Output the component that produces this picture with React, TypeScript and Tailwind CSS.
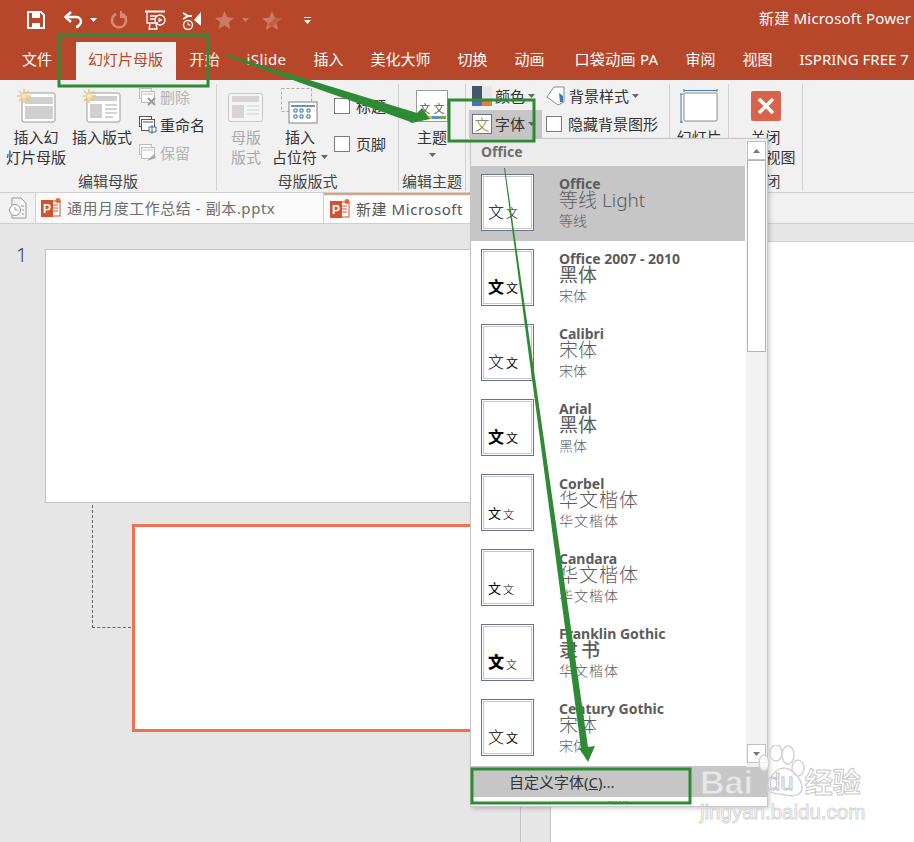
import type { ReactNode } from "react";

const tabs = ["文件", "幻灯片母版", "开始", "iSlide", "插入", "美化大师", "切换", "动画", "口袋动画 PA", "审阅", "视图", "ISPRING FREE 7"];

const fontSets = [
  { name: "Office", major: "等线 Light", minor: "等线", big: "font-light", a: "font-light", b: "font-light" },
  { name: "Office 2007 - 2010", major: "黑体", minor: "宋体", big: "font-normal", a: "font-bold", b: "font-normal" },
  { name: "Calibri", major: "宋体", minor: "宋体", big: "font-light", a: "font-light", b: "font-normal" },
  { name: "Arial", major: "黑体", minor: "黑体", big: "font-normal", a: "font-bold", b: "font-normal" },
  { name: "Corbel", major: "华文楷体", minor: "华文楷体", big: "font-light tracking-[1px]", a: "font-normal text-[13px]", b: "font-light text-[11px]" },
  { name: "Candara", major: "华文楷体", minor: "华文楷体", big: "font-light tracking-[1px]", a: "font-normal text-[13px]", b: "font-light text-[11px]" },
  { name: "Franklin Gothic", major: "隶书", minor: "华文楷体", big: "font-medium text-[16px] tracking-[3px]", a: "font-black", b: "font-light text-[11px]" },
  { name: "Century Gothic", major: "宋体", minor: "宋体", big: "font-light", a: "font-light", b: "font-normal" },
];

function Caret({ className = "text-[#666]" }: { className?: string }) {
  return (
    <svg width="7" height="4" viewBox="0 0 7 4" className={className}>
      <path d="M0 0h7L3.500 4z" fill="currentColor" />
    </svg>
  );
}

function Sun({ x, y }: { x: number; y: number }) {
  return (
    <g stroke="#f0c778" strokeWidth="1.5" transform={`translate(${x} ${y})`}>
      <path d="M0-7V7M-7 0H7M-5-5 5 5M-5 5 5-5" />
      <circle r="2.500" fill="#fbe6b8" stroke="none" />
    </g>
  );
}

function PptIcon() {
  return (
    <svg width="20" height="20" viewBox="0 0 20 20" className="shrink-0">
      <rect x="9" y="3" width="10" height="15" fill="#fff" stroke="#d2512e" />
      <path d="M12 7h5M12 10h5M12 13h5" stroke="#d2512e" />
      <rect x="0" y="2" width="12" height="17" fill="#d2512e" />
      <text x="6" y="15" fontSize="12" fontWeight="700" textAnchor="middle" fill="#fff" fontFamily="Liberation Sans">P</text>
      <circle cx="17" cy="2.500" r="2.500" fill="#f0642f" />
    </svg>
  );
}

function SmallGlyph({ muted = false, badge }: { muted?: boolean; badge: ReactNode }) {
  const c = muted ? "#bdbdbd" : "#555";
  return (
    <svg width="18" height="18" viewBox="0 0 18 18" className="shrink-0">
      <rect x=".5" y=".5" width="12" height="10" fill="#fff" stroke={c} />
      <rect x="2.500" y="3.500" width="13" height="11" fill="#fff" stroke={c} />
      <path d="M4 6h10" stroke={c} />
      {badge}
    </svg>
  );
}

function Large({ w, icon, lines, muted, caret }: { w: string; icon: ReactNode; lines: string[]; muted?: boolean; caret?: boolean }) {
  return (
    <div className={`${w} flex h-[87px] flex-col items-center ${muted ? "text-[#a9a9a9]" : "text-[#333]"}`}>
      <div className="flex h-[43px] items-center justify-center">{icon}</div>
      {lines.map((l, i) => (
        <div key={l} className="flex items-center gap-1 whitespace-nowrap leading-5">
          {l}
          {caret && i === lines.length - 1 && <Caret />}
        </div>
      ))}
    </div>
  );
}

function Group({ w, label, children }: { w: string; label: string; children: ReactNode }) {
  return (
    <div className={`${w} flex h-[107px] flex-col border-r border-[#d2d2d2]`}>
      <div className="flex h-[87px]">{children}</div>
      <div className="text-center leading-5 whitespace-nowrap text-[#444]">{label}</div>
    </div>
  );
}

function Small({ icon, label, muted }: { icon: ReactNode; label: string; muted?: boolean }) {
  return (
    <div className={`flex h-7 items-center gap-[3px] whitespace-nowrap ${muted ? "text-[#b4b4b4]" : "text-[#333]"}`}>
      {icon}
      {label}
    </div>
  );
}

function CheckRow({ label }: { label: string }) {
  return (
    <div className="flex h-[22px] items-center gap-[6px] whitespace-nowrap text-[#333]">
      <span className="h-4 w-4 border border-[#7d7d7d] bg-white" />
      {label}
    </div>
  );
}

function FontRow({ item, active }: { item: (typeof fontSets)[number]; active: boolean }) {
  return (
    <div className={`flex h-[75px] w-[274px] ${active ? "bg-[#c6c6c6]" : ""}`}>
      <div className="mt-2 ml-[10px] flex h-[57px] w-[53px] items-end justify-start gap-[2px] border border-[#6a7283] bg-white pb-[10px] pl-[6px] text-black shadow-[inset_0_0_0_1px_#fff,inset_0_0_0_2px_#c3c8d0]">
        <span className={`leading-none ${item.a.includes("text-[") ? "" : "text-[16px]"} ${item.a}`}>文</span>
        <span className={`leading-none ${item.b.includes("text-[") ? "" : "text-[12px]"} ${item.b}`}>文</span>
      </div>
      <div className="ml-[25px] flex flex-col pt-[10px] text-[#5c5c5c]">
        <div className="h-[14px] text-[14px] leading-[15px] font-bold whitespace-nowrap">{item.name}</div>
        <div className={`-mt-px h-[22px] text-[19px] leading-[22px] whitespace-nowrap ${item.big}`}>{item.major}</div>
        <div className={`text-[14px] leading-[20px] font-light whitespace-nowrap ${item.minor === "华文楷体" ? "tracking-[1px]" : ""}`}>{item.minor}</div>
      </div>
    </div>
  );
}

function FontMenu() {
  return (
    <div className="absolute top-[138px] left-[470px] flex h-[669px] w-[298px] flex-col border border-[#c6c6c6] bg-white shadow-[2px_2px_4px_rgba(0,0,0,0.18)]">
      <div className="flex min-h-0 flex-1">
        <div className="w-[275px] border-b border-[#c6c6c6]">
          <div className="h-[27px] bg-[#ececec] pl-[10px] text-[14px] leading-[25px] font-bold text-[#6e6e6e]">Office</div>
          {fontSets.map((f, i) => (
            <FontRow key={f.name} item={f} active={i === 0} />
          ))}
        </div>
        <div className="flex w-[21px] flex-col bg-[#f1f1f1] pt-[2px] pl-[1px]">
          <div className="flex h-[19px] w-[19px] items-center justify-center border border-[#c0c0c0] bg-white">
            <Caret className="rotate-180 text-[#777]" />
          </div>
          <div className="h-[192px] w-[19px] border border-[#b4b4b4] bg-white" />
          <div className="flex-1" />
          <div className="mb-[4px] flex h-[19px] w-[19px] items-center justify-center border border-[#c0c0c0] bg-white">
            <Caret className="text-[#777]" />
          </div>
        </div>
      </div>
      <div className="flex h-[30px] items-center bg-[#c6c6c6] pl-[38px] text-[#333]">
        自定义字体(<span className="underline">C</span>)...
      </div>
      <div className="flex h-[9px] items-center justify-center pr-[2px] text-[#b0b0b0]">
        <span className="h-[2px] w-[20px] border-t-2 border-dotted border-[#b5b5b5]" />
      </div>
    </div>
  );
}

function Marks() {
  return (
    <svg className="pointer-events-none absolute inset-0" width="914" height="842" viewBox="0 0 914 842">
      <g fill="none" stroke="#2f8a36" strokeWidth="3">
        <rect x="59" y="35" width="149" height="51" />
        <rect x="449" y="100" width="85" height="41" />
        <rect x="472" y="769" width="218" height="34" />
      </g>
      <path d="M225 54 225 56 408 121 412 123 430 119 422 108 417 113z" fill="#2f8a36" />
      <path d="M504 168 505 168 588 747 595 746 588 762 579 748 581 748z" fill="#2f8a36" />
    </svg>
  );
}

function Watermark() {
  return (
    <div className="pointer-events-none absolute top-[745px] left-[700px] flex w-[170px] flex-col">
      <svg width="60" height="56" viewBox="0 0 60 56" className="absolute top-0 left-[58px]" fill="none" stroke="#d2d2d2" strokeWidth="1.500">
        <ellipse cx="6" cy="18" rx="5" ry="8" fill="#ffffff" fillOpacity=".8" />
        <ellipse cx="18" cy="8" rx="6" ry="8" fill="#ffffff" fillOpacity=".8" />
        <ellipse cx="30" cy="10" rx="6" ry="9" fill="#ffffff" fillOpacity=".8" />
        <ellipse cx="40" cy="23" rx="6" ry="8" fill="#ffffff" fillOpacity=".8" />
        <path d="M10 42c0-10 9-19 16-19s18 10 18 20c0 7-8 9-16 7s-18 0-18-8z" fill="#ffffff" fillOpacity=".6" />
      </svg>
      <div className="relative mt-[17px] flex items-center">
        <span className="text-[34px] leading-[40px] font-black text-[#e8e8e8] [-webkit-text-stroke:1px_#c9c9c9]" style={{ fontFamily: "Liberation Sans" }}>Bai</span>
        <span className="ml-[14px] text-[24px] leading-[40px] text-white [-webkit-text-stroke:1px_#c4c4c4]" style={{ fontFamily: "Liberation Sans" }}>du</span>
        <span className="ml-[11px] text-[28px] leading-[40px] font-bold text-white [-webkit-text-stroke:1px_#c9c9c9]">经验</span>
      </div>
      <div className="relative text-[20.500px] leading-[20px] text-white [-webkit-text-stroke:1px_#d6d6d6]" style={{ fontFamily: "Liberation Sans" }}>jingyan.baidu.com</div>
    </div>
  );
}

export default function App() {
  return (
    <div
      className="relative flex h-[842px] w-[914px] flex-col overflow-hidden bg-white text-[15px]"
      style={{ fontFamily: '"Noto Sans","Noto Sans CJK SC",sans-serif' }}
    >
      {/* title bar */}
      <div className="flex h-[40px] items-center bg-[#b7472a] pl-[27px] text-white">
        <svg width="18" height="18" viewBox="0 0 18 18">
          <path d="M1 1h13l3 3v13H1z" fill="none" stroke="#fff" strokeWidth="2" />
          <path d="M5 2h8v5H5zM5 12h8v4H5z" fill="#fff" />
        </svg>
        <svg width="20" height="18" viewBox="0 0 20 18" className="ml-[19px]">
          <path d="M2 6h10c4 0 5 3 5 4.500S15 16 12 16" fill="none" stroke="#fff" strokeWidth="2.500" />
          <path d="M7 1 1.500 6 7 11" fill="none" stroke="#fff" strokeWidth="2.500" />
        </svg>
        <Caret className="ml-[6px] text-white" />
        <svg width="18" height="18" viewBox="0 0 18 18" className="ml-[13px]">
          <path d="M6 3a7 7 0 1 0 6 0" fill="none" stroke="#d58a75" strokeWidth="2.500" />
          <path d="M11 0v6h6" fill="none" stroke="#d58a75" strokeWidth="2" />
        </svg>
        <svg width="21" height="20" viewBox="0 0 21 20" className="ml-[17px]">
          <path d="M0 1.500h20" stroke="#fff" strokeWidth="2" />
          <path d="M2 2v11h11M5 6h7M5 9h5M5 14 4 19h8l-1-5" fill="none" stroke="#fff" strokeWidth="1.300" />
          <circle cx="15" cy="10" r="5" fill="none" stroke="#fff" strokeWidth="1.300" />
          <path d="M13.500 7.500v5l4-2.500z" fill="#fff" />
        </svg>
        <svg width="20" height="20" viewBox="0 0 20 20" className="ml-[16px]">
          <path d="M19 2v14l-7-6z" fill="#fff" />
          <path d="M1 3l5 3-5 3M4 6h6" fill="none" stroke="#fff" strokeWidth="1.800" />
          <circle cx="6" cy="15" r="4.500" fill="none" stroke="#fff" strokeWidth="1.300" />
          <path d="M6 12.500V15h2.500" fill="none" stroke="#fff" />
        </svg>
        <svg width="19" height="18" viewBox="0 0 19 18" className="ml-[13px]">
          <path d="m9.500 0 2.700 6.300 6.800.6-5.200 4.400 1.600 6.700-5.900-3.500L3.600 18l1.600-6.700L0 6.900l6.800-.6z" fill="#cd7a63" />
        </svg>
        <Caret className="ml-[8px] text-[#cd7a63]" />
        <svg width="20" height="19" viewBox="0 0 19 18" className="ml-[13px]">
          <path d="m9.500 0 2.700 6.300 6.800.6-5.200 4.400 1.600 6.700-5.900-3.500L3.600 18l1.600-6.700L0 6.900l6.800-.6z" fill="#cd7a63" />
          <path d="m5 13 10-8 3 2-9 9z" fill="#b7472a" opacity=".5" />
        </svg>
        <div className="ml-[22px] flex flex-col items-center gap-[2px]">
          <span className="h-[1px] w-[7px] bg-white" />
          <Caret className="text-white" />
        </div>
        <div className="ml-[448px] pb-[4px] whitespace-nowrap tracking-[.2px]">新建 Microsoft Power</div>
      </div>

      {/* ribbon tabs */}
      <div className="flex h-[40px] items-end bg-[#b7472a] pl-[8.500px] whitespace-nowrap text-white">
        {tabs.map((t) => (
          <div
            key={t}
            className={
              t === "幻灯片母版"
                ? "ml-[10.500px] flex h-[38px] w-[100px] shrink-0 items-center bg-[#f1f1f1] pb-[3px] pl-[12px] text-[#b7472a]"
                : t === "iSlide"
                  ? "flex h-[38px] shrink-0 items-center px-[13.500px] pb-[3px] tracking-[.4px]"
                  : t === "口袋动画 PA"
                    ? "ml-[3px] flex h-[38px] shrink-0 items-center px-[13.500px] pb-[3px] tracking-[.3px]"
                    : "flex h-[38px] shrink-0 items-center px-[13.500px] pb-[3px]"
            }
          >
            {t}
          </div>
        ))}
      </div>

      {/* ribbon */}
      <div className="flex h-[113px] items-start border-b border-[#cfcfcf] bg-[#f1f1f1] pt-[4px] text-[15px]">
        <Group w="w-[217px]" label="编辑母版">
          <Large
            w="w-[72px]"
            lines={["插入幻", "灯片母版"]}
            icon={
              <svg width="40" height="36" viewBox="0 0 40 36">
                <rect x="6" y="5" width="33" height="29" rx="2" fill="#fff" stroke="#9a9a9a" />
                <rect x="9" y="9" width="28" height="7" fill="#cfcfcf" />
                <rect x="9" y="18" width="28" height="13" fill="#cfcfcf" />
                <Sun x={8} y={8} />
              </svg>
            }
          />
          <Large
            w="w-[60px]"
            lines={["插入版式"]}
            icon={
              <svg width="38" height="36" viewBox="0 0 38 36">
                <rect x="4" y="5" width="33" height="29" rx="2" fill="#fff" stroke="#9a9a9a" />
                <rect x="7" y="8" width="27" height="5" fill="#cfcfcf" />
                <rect x="7" y="16" width="12" height="14" fill="#cfcfcf" />
                <path d="M22 17h12M22 21h12M22 25h12M22 29h8" stroke="#a9a9a9" />
                <Sun x={6} y={8} />
              </svg>
            }
          />
          <div className="-mt-px ml-[7px] flex flex-col">
            <Small muted label="删除" icon={<SmallGlyph muted badge={<path d="M9 10l7 7M16 10l-7 7" stroke="#9a9a9a" strokeWidth="2" />} />} />
            <Small label="重命名" icon={<SmallGlyph badge={<path d="M10 11h7v5h-7zM13 9v9" fill="#fff" stroke="#35709c" />} />} />
            <Small muted label="保留" icon={<SmallGlyph muted badge={<path d="m8 17 4-4 3-3 2 3-3 2z" fill="#aaa" />} />} />
          </div>
        </Group>

        <Group w="w-[182px]" label="母版版式">
          <Large
            w="w-[58px]"
            muted
            lines={["母版", "版式"]}
            icon={
              <svg width="36" height="30" viewBox="0 0 36 30" className="mt-[5px]">
                <rect x=".5" y=".5" width="34" height="28" rx="2" fill="#f5f5f5" stroke="#c8c8c8" />
                <rect x="4" y="3" width="27" height="6" fill="#d9d3d3" />
                <rect x="4" y="12" width="12" height="13" fill="#d9d3d3" />
                <path d="M19 13h12M19 17h12M19 21h12" stroke="#d0d0d0" />
              </svg>
            }
          />
          <Large
            w="w-[50px]"
            lines={["插入", "占位符"]}
            caret
            icon={
              <svg width="38" height="36" viewBox="0 0 38 36">
                <rect x=".5" y=".5" width="30" height="23" fill="none" stroke="#aaa" strokeDasharray="3 2" />
                <rect x="8" y="14" width="28" height="21" fill="#fff" stroke="#808080" />
                <path d="M10 18h24" stroke="#3d6fa8" strokeWidth="1.500" />
                <path d="M13 21h3v3h-3zM19 21h3v3h-3zM26 21h3v3h-3zM13 27h3v3h-3zM19 27h3v3h-3zM26 27h3v3h-3z" fill="none" stroke="#3d6fa8" />
              </svg>
            }
          />
          <div className="ml-[9px] flex flex-col gap-[16px] pt-[11px]">
            <CheckRow label="标题" />
            <CheckRow label="页脚" />
          </div>
        </Group>

        <Group w="w-[67px]" label="编辑主题">
          <div className="flex w-full flex-col items-center text-[#333]">
            <div className="flex h-[43px] items-center">
              <div className="flex h-[32px] w-[32px] flex-col items-center justify-end border border-[#9a9a9a] bg-white pb-[2px] text-[11px] leading-[14px] text-[#555]">
                文 文
                <span className="h-[3px] w-[27px] bg-[linear-gradient(90deg,#d9622b_25%,#e8b23a_25%_50%,#5a8fd0_50%_75%,#70ad47_75%)]" />
              </div>
            </div>
            <div className="leading-5">主题</div>
            <Caret className="mt-[6px] text-[#666]" />
          </div>
        </Group>

        <Group w="w-[204px]" label="">
          <div className="flex flex-col pl-[3px]">
            <div className="flex h-[24px] items-center gap-[3px] pl-[3px] text-[#333]">
              <span className="grid h-5 w-5 grid-cols-2 grid-rows-[13px_7px]">
                <span className="bg-[#44546a]" />
                <span className="bg-[#e7e6e6]" />
                <span className="bg-[#4472c4]" />
                <span className="bg-[#ed7d31]" />
              </span>
              颜色
              <Caret />
            </div>
            <div className="mt-[2px] flex h-[28px] w-[73px] items-center gap-[3px] bg-[#c6c6c6] pl-[3px] text-[#333]">
              <span className="flex h-5 w-5 items-center justify-center border border-[#6a7283] bg-white text-[15px] leading-none font-light text-[#8a6a3a]">文</span>
              字体
              <Caret />
            </div>
          </div>
          <div className="ml-[4px] flex flex-col text-[#333]">
            <div className="flex h-[24px] items-center gap-[3px]">
              <svg width="20" height="20" viewBox="0 0 20 20">
                <path d="M8 1h10v15l-6 3-11-8z" fill="#fff" stroke="#888" />
                <path d="m13 7 4 3v6h-3z" fill="#3d78b8" />
              </svg>
              背景样式
              <Caret />
            </div>
            <div className="mt-[2px] flex h-[28px] items-center gap-[6px]">
              <span className="h-4 w-4 border border-[#7d7d7d] bg-white" />
              隐藏背景图形
            </div>
          </div>
        </Group>

        <Group w="w-[59px]" label="">
          <Large
            w="w-full"
            lines={["幻灯片"]}
            icon={
              <svg width="38" height="34" viewBox="0 0 38 34">
                <path d="M4 1.500h33M4 0v3M37 0v3M1 5v29M0 5h3M0 33h3" stroke="#4a7eb5" fill="none" />
                <rect x="4" y="4" width="33" height="28" rx="1" fill="#fff" stroke="#8a8a8a" />
              </svg>
            }
          />
        </Group>

        <Group w="w-[74px]" label="关闭">
          <Large
            w="w-full"
            lines={["关闭", "母版视图"]}
            icon={
              <span className="flex h-[30px] w-[30px] items-center justify-center rounded-[2px] bg-[#d9634a] text-white">
                <svg width="18" height="18" viewBox="0 0 18 18">
                  <path d="M2 2l14 14M16 2 2 16" stroke="#fff" strokeWidth="3.500" />
                </svg>
              </span>
            }
          />
        </Group>
      </div>

      {/* document tabs */}
      <div className="flex h-[31px] border-b border-[#cfcfcf] bg-[#f1f1f1] whitespace-nowrap">
        <div className="flex w-[36px] items-center justify-center border-r border-[#cfcfcf]">
          <svg width="20" height="22" viewBox="0 0 20 22">
            <path d="M4 1h9l5 5v15H4z" fill="#f5f5f5" stroke="#999" />
            <circle cx="7" cy="13" r="5.500" fill="#fff" stroke="#999" />
            <path d="M7 10v3h3M13 9h3M14 13h2M14 17h2" fill="none" stroke="#999" />
          </svg>
        </div>
        <div className="flex w-[288px] items-center gap-[6px] border-r border-[#cfcfcf] bg-[#fafafa] pl-[5px] text-[#6f6f6f]">
          <PptIcon />
          <span className="tracking-[.55px]">通用月度工作总结 - 副本.pptx</span>
        </div>
        <div className="flex w-[146px] items-center gap-[6px] border-t-2 border-[#ef9a76] bg-white pl-[6px] text-[#555]">
          <PptIcon />
          <span className="tracking-[.55px]">新建 Microsoft</span>
        </div>
      </div>

      {/* workspace */}
      <div className="flex min-h-0 flex-1">
        <div className="relative w-[521px] border-r border-[#c4c4c4] bg-[#e6e6e6] pt-[25px]">
          <div className="flex">
            <div className="-mt-[7px] w-[45px] pl-[16px] text-[20px] leading-[26px] font-light text-[#444]">1</div>
            <div className="h-[254px] w-[440px] border border-[#c4c4c4] bg-white" />
          </div>
          <div className="relative mt-[21px] ml-[132px] h-[208px] w-[361px] border-[3px] border-[#f1704f] bg-white">
            <div className="absolute top-[-22px] left-[-43px] h-[123px] w-[39px] border-b border-l border-dashed border-[#666]" />
          </div>
        </div>
        <div className="w-[30px] border-r border-[#c4c4c4] bg-[#e6e6e6]" />
        <div className="flex-1 bg-white">
          <div className="h-[18px] border-b border-[#cfcfcf] bg-[#e6e6e6]" />
        </div>
      </div>

      <FontMenu />
      <Watermark />
      <Marks />
    </div>
  );
}
